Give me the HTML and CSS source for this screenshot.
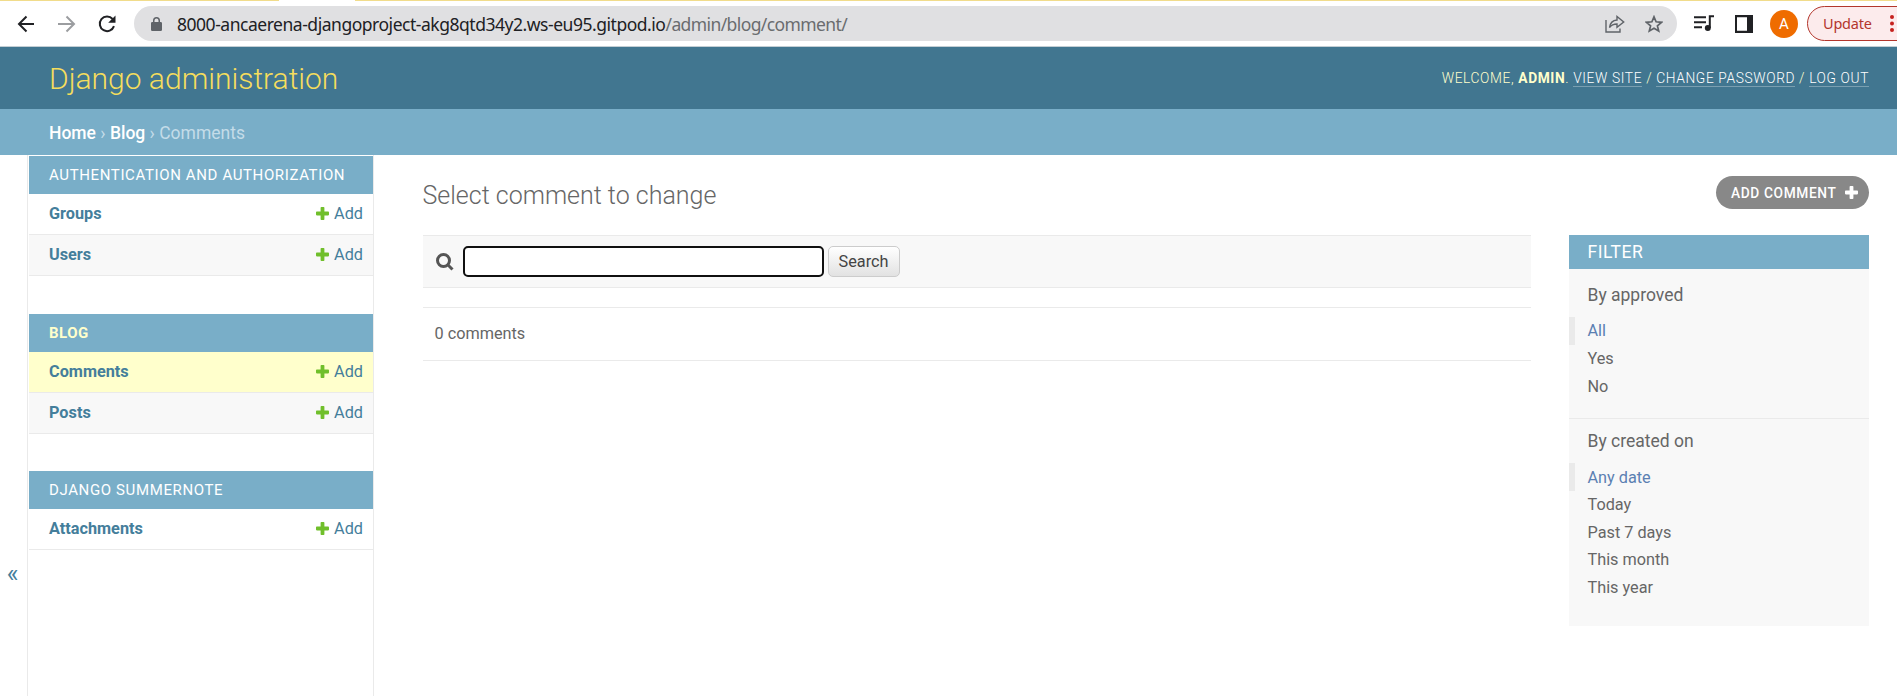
FILE: index.html
```html
<!DOCTYPE html>
<html lang="en">
<head>
<meta charset="utf-8">
<title>Select comment to change | Django site admin</title>
<link rel="stylesheet" href="styles.css">
</head>
<body>
<svg class="defs" aria-hidden="true">
  <symbol id="plus" viewBox="0 0 13 13"><path d="M4.6 0.8Q4.6 0 5.4 0h2.2q.8 0 .8.8v3.8h3.8q.8 0 .8.8v2.2q0 .8-.8.8H8.4v3.8q0 .8-.8.8H5.4q-.8 0-.8-.8V8.400H.8Q0 8.400 0 7.600V5.400q0-.8.8-.8h3.800z"/></symbol>
</svg>
<div class="browser">
  <div class="tabstrip"><span class="tab"></span></div>
  <div class="toolbar">
    <svg class="nav back" viewBox="0 0 18 18"><path d="M17 9H2M9.500 1.500 2 9l7.500 7.500"/></svg>
    <svg class="nav forward" viewBox="0 0 18 18"><path d="M0 9h15.500M8.500 1.500 16 9l-7.500 7.500"/></svg>
    <svg class="nav reload" viewBox="0 0 18 18"><path d="M14.600 4A7.300 7.300 0 1 0 16 11.200"/><path class="solid" d="M17.500.5v7.300h-7.300z"/></svg>
    <div class="omnibox">
      <svg class="lock" viewBox="0 0 11 14"><path fill="#5f6368" d="M1.300 5H2V3.500a3.500 3.500 0 0 1 7 0V5h.7Q11 5 11 6.300v6.400q0 1.300-1.300 1.300H1.300Q0 14 0 12.700V6.300Q0 5 1.300 5zm2.200 0h4V3.500a2 2 0 0 0-4 0z"/></svg>
      <span class="url">8000-ancaerena-djangoproject-akg8qtd34y2.ws-eu95.gitpod.io<span class="path">/admin/blog/comment/</span></span>
      <svg class="share" viewBox="0 0 20 18"><path d="M1 5v12h14v-3.500M12 5V1.500L18.700 7 12 12.200V9Q7 9 4.500 12.500 5.500 5.500 12 5z"/></svg>
      <svg class="star" viewBox="0 0 18 18"><path d="m9 1.800 2.100 5 5.400.5-4.100 3.500 1.300 5.300L9 13.300l-4.700 2.800 1.300-5.300-4.100-3.500 5.400-.5z"/></svg>
    </div>
    <svg class="media" viewBox="0 0 20 17"><path d="M0 2.200h12M0 7.200h12M0 12.200h8M15.800 13V1.200H20" fill="none" stroke="#202124" stroke-width="2"/><circle cx="13.800" cy="13" r="3" fill="#202124"/></svg>
    <svg class="panel" viewBox="0 0 18 18"><path fill="#202124" fill-rule="evenodd" d="M0 0h18v18H0zM2 2.200v13.600h10V2.200z"/></svg>
    <span class="avatar">A</span>
    <div class="update"><span>Update</span><svg class="dots" viewBox="0 0 4 17"><circle cx="2" cy="2" r="2"/><circle cx="2" cy="8.500" r="2"/><circle cx="2" cy="15" r="2"/></svg></div>
  </div>
</div>
<header class="header">
  <h1 class="brand">Django administration</h1>
  <div class="usertools">Welcome, <strong>admin</strong>. <a>View site</a> / <a>Change password</a> / <a>Log out</a></div>
</header>
<nav class="breadcrumbs"><a>Home</a> › <a>Blog</a> › Comments</nav>
<div class="layout">
  <button class="toggle">«</button>
  <nav class="sidebar">
    <section class="app">
      <h2 class="caption">Authentication and Authorization</h2>
      <div class="row"><a class="model">Groups</a><a class="add"><svg><use href="#plus"/></svg>Add</a></div>
      <div class="row even"><a class="model">Users</a><a class="add"><svg><use href="#plus"/></svg>Add</a></div>
    </section>
    <section class="app app-blog">
      <h2 class="caption current">Blog</h2>
      <div class="row selected"><a class="model">Comments</a><a class="add"><svg><use href="#plus"/></svg>Add</a></div>
      <div class="row even"><a class="model">Posts</a><a class="add"><svg><use href="#plus"/></svg>Add</a></div>
    </section>
    <section class="app">
      <h2 class="caption">Django Summernote</h2>
      <div class="row"><a class="model">Attachments</a><a class="add"><svg><use href="#plus"/></svg>Add</a></div>
    </section>
  </nav>
  <main class="content">
    <div class="titlebar">
      <h1 class="title">Select comment to change</h1>
      <a class="addlink">Add comment<svg><use href="#plus"/></svg></a>
    </div>
    <div class="changelist">
      <div class="results">
        <form class="search">
          <svg class="magnifier" viewBox="0 0 18 18"><circle cx="7.500" cy="7.500" r="6" /><path d="m11.800 11.800 4.700 4.700"/></svg>
          <input class="query" type="text" aria-label="Search">
          <button class="submit" type="button">Search</button>
        </form>
        <p class="paginator">0 comments</p>
      </div>
      <aside class="filter">
        <h2 class="filter-head">Filter</h2>
        <section class="group">
          <h3>By approved</h3>
          <ul><li class="on">All</li><li>Yes</li><li>No</li></ul>
        </section>
        <section class="group last">
          <h3>By created on</h3>
          <ul><li class="on">Any date</li><li>Today</li><li>Past 7 days</li><li>This month</li><li>This year</li></ul>
        </section>
      </aside>
    </div>
  </main>
</div>
</body>
</html>
```
FILE: styles.css
```css
* { box-sizing: border-box; }
body { margin: 0; height: 696px; overflow: hidden; display: flex; flex-direction: column; background: #fff; color: #666; font: 16.25px Roboto, sans-serif; }
h1, h2, h3, p, ul { margin: 0; padding: 0; font-weight: 400; }
.defs { position: absolute; width: 0; height: 0; }
.browser { flex: none; height: 47px; border-bottom: 1px solid #c3ced4; overflow: hidden; }
.tabstrip { height: 1px; background: #f1dc8b; display: flex; }
.tab { width: 76px; height: 1px; margin-left: 279px; background: #fff; }
.toolbar { height: 45px; display: flex; align-items: center; }
.nav { flex: none; width: 18px; height: 18px; fill: none; stroke: #202124; stroke-width: 2; }
.back { margin-left: 17px; }
.forward { margin-left: 23px; stroke: #9b9da0; }
.reload { margin-left: 22px; }
.reload .solid { fill: #202124; stroke: none; }
.omnibox { flex: none; width: 1543px; height: 35px; margin-left: 18px; padding-left: 17px; border-radius: 18px; background: #e0e0e2; display: flex; align-items: center; }
.lock { width: 11px; height: 14px; }
.url { flex: 1; margin-left: 15px; color: #202124; font: 17.5px "Noto Sans", sans-serif; white-space: nowrap; letter-spacing: -0.47px; }
.path { color: #6a6c6f; letter-spacing: -0.6px; }
.share { width: 20px; height: 18px; fill: none; stroke: #5f6368; stroke-width: 1.4; }
.star { width: 18px; height: 18px; margin: 0 14px 0 20px; fill: none; stroke: #5f6368; stroke-width: 1.7; }
.media { flex: none; width: 20px; height: 17px; margin-left: 17px; }
.panel { flex: none; width: 18px; height: 18px; margin-left: 21px; }
.avatar { flex: none; width: 28px; height: 28px; margin-left: 17px; border-radius: 50%; background: #ef6c00; color: #fff; font-size: 15px; line-height: 28px; text-align: center; }
.update { flex: none; width: 110px; height: 35px; margin-left: 9px; padding-left: 15px; border: 1px solid #b3362c; border-radius: 18px; background: #fcebec; color: #b3362c; display: flex; align-items: center; font: 14.5px/30px "Noto Sans", sans-serif; letter-spacing: -.2px; }
.update span { width: 49px; padding-bottom: 2px; }
.dots { width: 4px; height: 17px; margin-left: 18px; fill: #c5221f; }
.header { flex: none; height: 62px; padding: 0 28px 0 49px; background: #417690; color: #ffc; display: flex; justify-content: space-between; align-items: center; }
.brand { color: #f5dd5d; font-size: 30px; font-weight: 300; }
.usertools { font-size: 13.75px; font-weight: 300; letter-spacing: .625px; text-transform: uppercase; white-space: pre; }
.usertools strong { font-weight: 700; }
.usertools a { color: #fff; border-bottom: 1px solid rgba(255,255,255,.3); }
.breadcrumbs { flex: none; height: 46px; padding: 1px 0 0 49px; line-height: 46px; font-size: 17.5px; background: #79aec8; color: #c4dce8; }
.breadcrumbs a { color: #fff; font-weight: 500; }
.layout { flex: 1; display: flex; }
.toggle { flex: none; width: 28px; height: 541px; padding: 404px 2px 0 0; border: 0; border-right: 1px solid #eaeaea; background: #fff; color: #447e9b; font: 25px/30px Roboto, sans-serif; display: flex; justify-content: center; align-items: flex-start; }
.sidebar { flex: none; width: 346px; padding: 1px 0 0 1px; border-right: 1px solid #eaeaea; }
.app { margin-bottom: 38px; }
.app-blog { margin-bottom: 37px; }
.caption { height: 38px; padding-left: 20px; background: #79aec8; color: #fff; font-size: 15px; line-height: 38px; letter-spacing: .625px; text-transform: uppercase; font-weight: 400; }
.current { color: #ffc; font-weight: 700; letter-spacing: .5px; }
.row { height: 41px; padding: 0 10px 2px 20px; border-bottom: 1px solid #eaeaea; display: flex; justify-content: space-between; align-items: center; color: #447e9b; }
.even { background: #f8f8f8; }
.selected { background: #ffffcc; }
.model { font-weight: 700; }
.add { display: flex; align-items: center; gap: 5px; }
.add svg { width: 13px; height: 13px; fill: #70bf2b; }
.content { flex: 1; padding: 21px 28px 0 48.5px; }
.titlebar { height: 59px; display: flex; justify-content: space-between; align-items: flex-start; }
.title { font-size: 25px; line-height: 40px; font-weight: 300; }
.addlink { height: 33px; width: 153px; padding-left: 15px; border-radius: 17px; background: #888; color: #fff; font-size: 13.75px; font-weight: 500; letter-spacing: .62px; text-transform: uppercase; display: flex; align-items: center; gap: 8px; white-space: nowrap; }
.addlink svg { width: 13px; height: 13px; fill: #fff; }
.changelist { display: flex; justify-content: space-between; align-items: flex-start; }
.results { width: 1108px; }
.search { height: 53px; padding-left: 13px; border: solid #eaeaea; border-width: 1px 0; background: #f8f8f8; display: flex; align-items: center; }
.magnifier { width: 18px; height: 18px; margin-right: 9px; fill: none; stroke: #555; stroke-width: 3; }
.query { width: 361px; height: 31px; border: 2px solid #101010; border-radius: 5px; background: #fff; }
.submit { width: 72px; height: 31px; margin-left: 4px; padding: 0; border: 1px solid #ccc; border-radius: 5px; background: linear-gradient(#fff, #e2e2e2); color: #444; font: 16.25px Roboto, sans-serif; }
.paginator { height: 54px; margin-top: 19px; padding-left: 12px; border: solid #eaeaea; border-width: 1px 0; line-height: 52px; }
.filter { width: 300px; height: 391px; background: #f8f8f8; }
.filter-head { height: 34px; padding-left: 18.5px; background: #79aec8; color: #fff; font-size: 17.5px; line-height: 34px; letter-spacing: .5px; text-transform: uppercase; }
.group { height: 150px; padding-top: 14px; border-bottom: 1px solid #eaeaea; }
.last { border: 0; padding-top: 10px; }
.group h3 { height: 24px; padding-left: 18.5px; font-size: 17.5px; line-height: 24px; }
.group ul { list-style: none; padding-top: 10px; }
.group li { height: 27.5px; padding-left: 18.5px; line-height: 27.5px; }
.group .on { height: 28px; padding-left: 12.5px; border-left: 6px solid #eaeaea; color: #5b80b2; line-height: 28px; }
.last .on { line-height: 30px; }
```
